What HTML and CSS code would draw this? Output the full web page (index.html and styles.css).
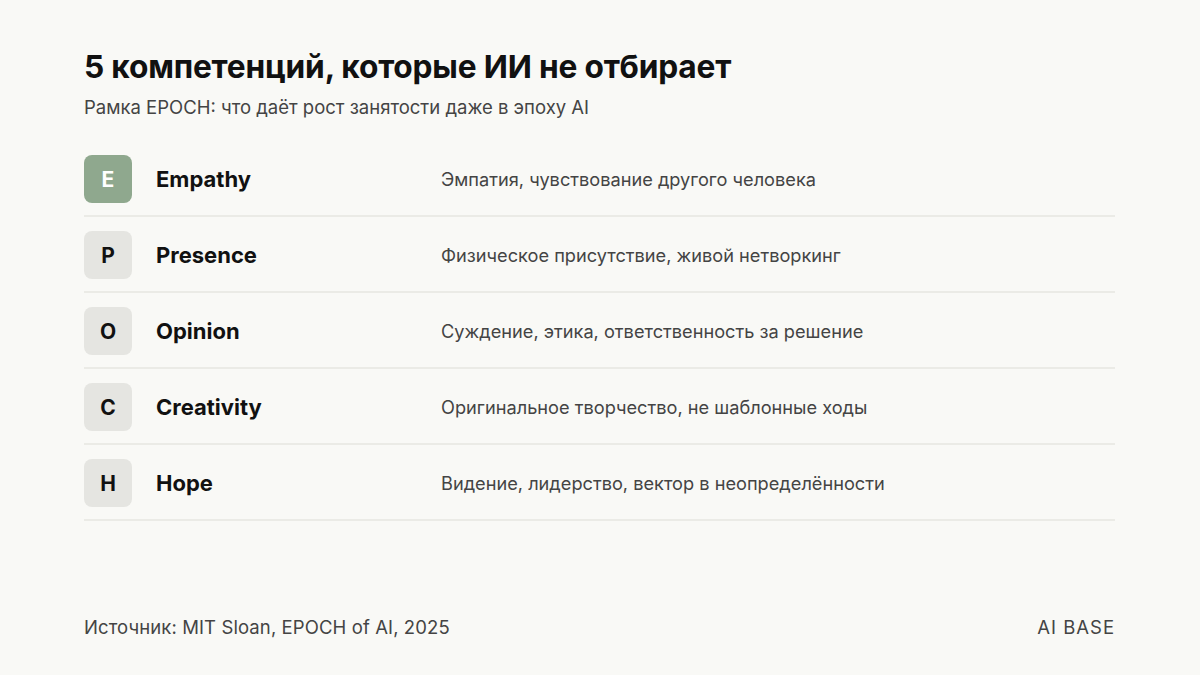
FILE: index.html
```html
<!DOCTYPE html>
<html lang="ru">
<head>
<meta charset="utf-8">
<link rel="stylesheet" href="styles.css">
</head>
<body>
<div class="slide">
  <header class="head">
    <h1 class="title">5 компетенций, которые ИИ не отбирает</h1>
    <p class="subtitle">Рамка EPOCH: что даёт рост занятости даже в эпоху AI</p>
  </header>
  <ul class="list">
    <li class="row"><span class="badge badge-accent">E</span><span class="name">Empathy</span><span class="desc">Эмпатия, чувствование другого человека</span></li>
    <li class="row"><span class="badge">P</span><span class="name">Presence</span><span class="desc">Физическое присутствие, живой нетворкинг</span></li>
    <li class="row"><span class="badge">O</span><span class="name">Opinion</span><span class="desc">Суждение, этика, ответственность за решение</span></li>
    <li class="row"><span class="badge">C</span><span class="name">Creativity</span><span class="desc">Оригинальное творчество, не шаблонные ходы</span></li>
    <li class="row"><span class="badge">H</span><span class="name">Hope</span><span class="desc">Видение, лидерство, вектор в неопределённости</span></li>
  </ul>
  <footer class="foot">
    <span class="source">Источник: MIT Sloan, EPOCH of AI, 2025</span>
    <span class="brand">AI BASE</span>
  </footer>
</div>
</body>
</html>
```
FILE: styles.css
```css
* { box-sizing: border-box; }
html, body { margin: 0; padding: 0; }
body {
  background: #f9f9f6;
  font-family: Inter, "Noto Sans", sans-serif;
  color: #111;
}
.slide {
  width: 1200px;
  height: 675px;
  padding: 48px 85px 0 84px;
  display: flex;
  flex-direction: column;
}
.title {
  margin: 0;
  font-size: 31.7px;
  font-weight: 700;
  letter-spacing: -0.2px;
  line-height: 38px;
}
.subtitle {
  margin: 9px 0 0;
  font-size: 18.5px;
  color: #444;
  line-height: 24px;
}
.list {
  list-style: none;
  margin: 22px 0 0;
  padding: 0;
}
.row {
  display: flex;
  align-items: center;
  height: 76px;
  padding-top: 2px;
  border-bottom: 2px solid #ebebe6;
}
.badge {
  width: 48px;
  height: 48px;
  border-radius: 8px;
  background: #e5e5e1;
  display: flex;
  align-items: center;
  justify-content: center;
  font-size: 21px;
  font-weight: 700;
  color: #111;
  flex: none;
}
.badge-accent {
  background: #8fa88e;
  color: #fff;
}
.name {
  margin-left: 24px;
  width: 285px;
  font-size: 22px;
  font-weight: 700;
  flex: none;
}
.desc {
  font-size: 18.2px;
  color: #444;
}
.foot {
  margin-top: auto;
  margin-bottom: 37px;
  display: flex;
  justify-content: space-between;
  font-size: 18.5px;
  color: #444;
}
.source { letter-spacing: 0.1px; }
.brand { letter-spacing: 1px; }
```
